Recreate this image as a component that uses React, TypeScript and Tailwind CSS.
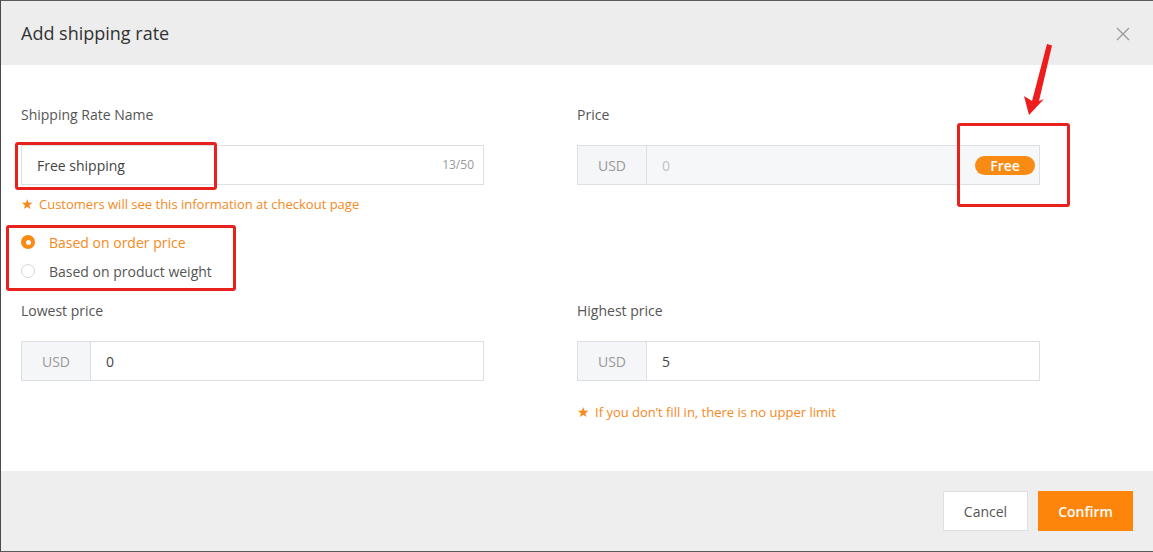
import React from 'react';

const Hint = ({ children }: { children: React.ReactNode }) => (
  <p className="flex items-center gap-[5px] text-[13px] leading-4 text-[#f5891c]">
    <span className="text-[14px]">★</span>
    {children}
  </p>
);

const Radio = ({ checked, label }: { checked?: boolean; label: string }) => (
  <label className="flex h-5 items-center gap-[14px]">
    {checked ? (
      <span className="flex h-[14px] w-[14px] items-center justify-center rounded-full bg-[#f98a14]">
        <span className="h-[5px] w-[5px] rounded-full bg-white" />
      </span>
    ) : (
      <span className="h-[14px] w-[14px] rounded-full border border-[#d6d9de] bg-white" />
    )}
    <span className={checked ? 'text-[#f5891c]' : 'text-[#555]'}>{label}</span>
  </label>
);

const MoneyInput = ({ value, disabled, badge }: { value: string; disabled?: boolean; badge?: boolean }) => (
  <div
    className={
      'flex h-10 items-center border border-[#dcdfe4] ' + (disabled ? 'bg-[#f6f7f9]' : 'bg-white')
    }
  >
    <span className="flex h-full w-[69px] items-center justify-center border-r border-[#dcdfe4] bg-[#f5f6f8] text-[14px] text-[#999]">
      USD
    </span>
    <span className={'flex-1 pl-[15px] text-[14px] ' + (disabled ? 'text-[#c2c2c2]' : 'text-[#444]')}>{value}</span>
    {badge && (
      <span className="mr-[4px] flex h-[19px] w-[60px] items-center justify-center rounded-full bg-[#f98a14] text-[14px] font-semibold text-white">
        Free
      </span>
    )}
  </div>
);

export default function App() {
  return (
    <div
      className="relative flex h-[552px] w-[1153px] flex-col overflow-hidden border-y border-l border-y-[#5a5a5a] border-l-[#4a4a4a] bg-white text-[14px] text-[#555]"
      style={{ fontFamily: '"Open Sans", "Noto Sans", sans-serif' }}
    >
      {/* header */}
      <div className="flex h-16 shrink-0 items-center justify-between bg-[#ededed] pl-5 pr-[23px]">
        <h1 className="text-[18px] text-[#333]">Add shipping rate</h1>
        <svg width="14" height="14" viewBox="0 0 14 14" className="mt-[2px]">
          <path d="M1 1L13 13M13 1L1 13" stroke="#999" strokeWidth="1.3" />
        </svg>
      </div>

      {/* body */}
      <div className="flex-1 pl-5 pt-[40px]">
        <div className="grid w-[1019px] grid-cols-2 gap-x-[93px]">
          <div>
            <p className="h-5 leading-5">Shipping Rate Name</p>
            <div className="mt-[20px] flex h-10 items-center justify-between border border-[#dcdfe4] pl-[15px] pr-[9px]">
              <span className="text-[#444]">Free shipping</span>
              <span className="text-[12px] text-[#999]">13/50</span>
            </div>
            <div className="mt-[11px]">
              <Hint>Customers will see this information at checkout page</Hint>
            </div>
            <div className="mt-[20px] flex flex-col gap-[9px]">
              <Radio checked label="Based on order price" />
              <Radio label="Based on product weight" />
            </div>
          </div>
          <div>
            <p className="h-5 leading-5">Price</p>
            <div className="mt-[20px]">
              <MoneyInput value="0" disabled badge />
            </div>
          </div>

          <div className="mt-[20px]">
            <p className="h-5 leading-5">Lowest price</p>
            <div className="mt-[20px]">
              <MoneyInput value="0" />
            </div>
          </div>
          <div className="mt-[20px]">
            <p className="h-5 leading-5">Highest price</p>
            <div className="mt-[20px]">
              <MoneyInput value="5" />
            </div>
            <div className="mt-[23px]">
              <Hint>If you don’t fill in, there is no upper limit</Hint>
            </div>
          </div>
        </div>
      </div>

      {/* footer */}
      <div className="flex h-20 shrink-0 items-start justify-end gap-[10px] bg-[#eeeeee] pr-5 pt-5">
        <button className="h-10 w-[85px] border border-[#dcdfe4] bg-white text-[14px] text-[#555]">Cancel</button>
        <button className="h-10 w-[95px] bg-[#fd850b] text-[14px] font-semibold text-white">Confirm</button>
      </div>

      {/* annotations */}
      <div className="pointer-events-none absolute left-[14px] top-[141px] h-[48px] w-[202px] rounded-[3px] border-[3px] border-[#e8211e]" />
      <div className="pointer-events-none absolute left-[5px] top-[224px] h-[66px] w-[230px] rounded-[3px] border-[3px] border-[#e8211e]" />
      <div className="pointer-events-none absolute left-[956px] top-[122px] h-[84px] w-[113px] rounded-[3px] border-[3px] border-[#e8211e]" />
      <svg className="pointer-events-none absolute left-0 top-0" width="1153" height="552">
        <polygon
          points="1046,43 1051,44.5 1038,100 1043,98 1028,114 1023,95 1031,100"
          fill="#ee1c1c"
        />
      </svg>
    </div>
  );
}
